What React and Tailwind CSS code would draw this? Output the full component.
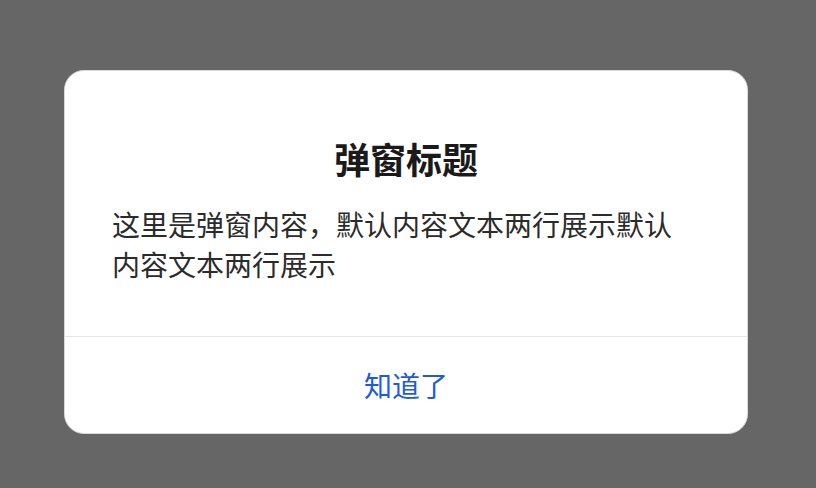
import React from "react";

const App = () => {
  return (
    <div
      className="w-[816px] h-[488px] bg-[#666666] pt-[70px] pl-[64px]"
      style={{ fontFamily: '"Noto Sans CJK SC", "Noto Sans", sans-serif' }}
    >
      <div className="w-[684px] h-[364px] bg-white rounded-[20px] border border-[#d9d9d9] overflow-hidden flex flex-col">
        {/* Body */}
        <div className="flex-1 pt-[63px] pl-[47px] pr-[60px]">
          <h2 className="text-center text-[36px] leading-[48px] font-bold text-[#1a1a1a] pl-[13px]">
            弹窗标题
          </h2>
          <p className="mt-[22px] text-[28px] leading-[40px] text-[#2b2b2b]">
            这里是弹窗内容，默认内容文本两行展示默认内容文本两行展示
          </p>
        </div>

        {/* Footer */}
        <div className="border-t border-[#e6e6e6] h-[97px] flex items-center justify-center">
          <button className="text-[28px] leading-[40px] text-[#1f5bd6]">知道了</button>
        </div>
      </div>
    </div>
  );
};

export default App;
